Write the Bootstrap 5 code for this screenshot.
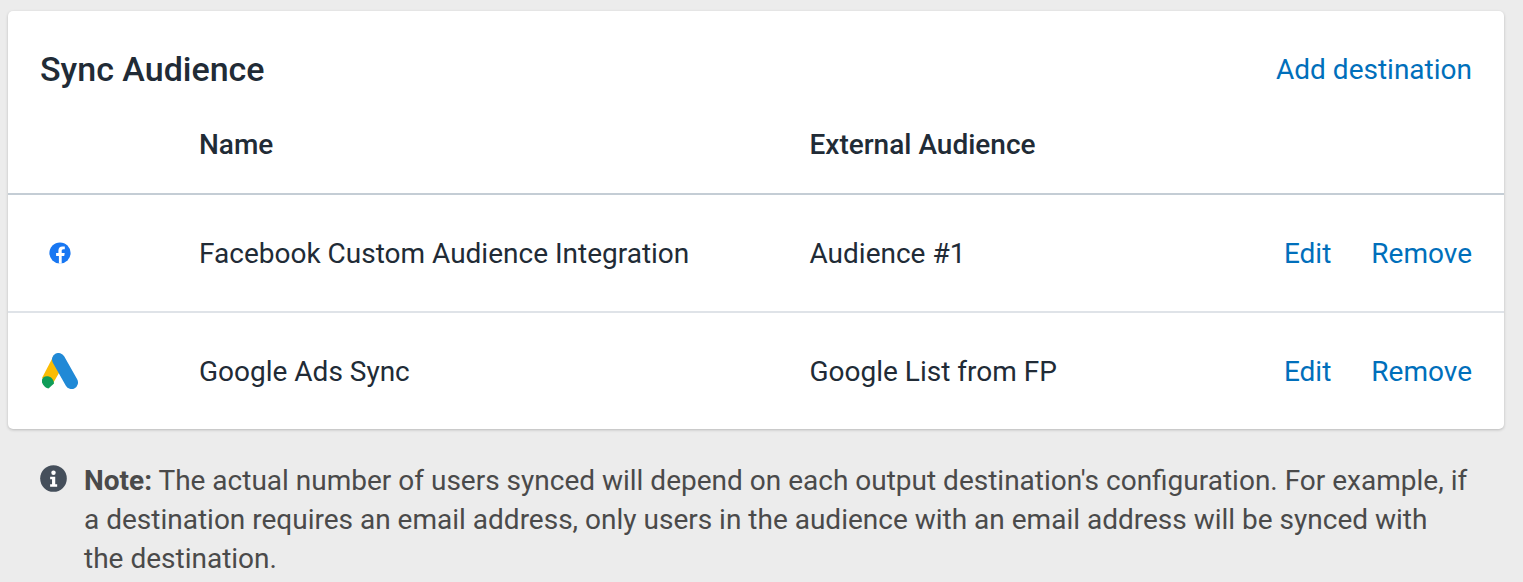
<!doctype html>
<html lang="en"><head><meta charset="utf-8">
<link href="https://cdn.jsdelivr.net/npm/bootstrap@5.3.0/dist/css/bootstrap.min.css" rel="stylesheet">
<style>
html,body{height:582px;overflow:hidden}
body{background:#ececec;font-family:Roboto,sans-serif;font-size:28px;color:#212b36}
.wrapper{padding:11px 19px 0 8px}
.panel{background:#fff;border-radius:5px;box-shadow:0 1px 3px rgba(0,0,0,.22);height:418px}
.head-row{height:109px;padding:37px 32px 0;align-items:flex-start}
.title{font-size:34px;font-weight:500;line-height:42px;margin:0}
a.act{color:#006fbb;text-decoration:none;font-size:28px;line-height:42px}
a.add-link{margin-top:1px}
.cell-icon{width:191px;padding-left:32px;flex:none}
.cell-name{width:610.5px;flex:none}
.cell-ext{flex:1 1 auto}
.hdr{height:75px;border-bottom:2px solid #c4cdd5;font-weight:500;padding-bottom:23px}
.rowx{height:118px;border-bottom:2px solid #dfe3e8}
.rowx.end{border-bottom:0;height:116px}
.rowx .cell-name,.rowx .cell-ext,.rowx .acts{padding-top:2px}
.acts{padding-right:32px;gap:40px}
.note{padding:31px 34px 0 32px;color:#4a4a4a;line-height:39px;gap:17px}
.note-text{padding-top:1px}
.note b{font-weight:700}
.ic-info{flex:none;margin-top:5px}
.ic-fb{margin-left:9px}
.ic-ads{margin-left:1px}
svg{display:block}
</style></head><body>
<div class="wrapper">
<div class="panel">
<div class="d-flex justify-content-between head-row"><h2 class="title">Sync Audience</h2><a class="act add-link" href="#">Add destination</a></div>
<div class="d-flex align-items-center hdr"><div class="cell-icon"></div><div class="cell-name">Name</div><div class="cell-ext">External Audience</div></div>
<div class="d-flex align-items-center rowx"><div class="cell-icon"><svg class="ic-fb" width="22" height="22" viewBox="0 0 22 22"><circle cx="11" cy="11" r="10.600" fill="#1877f2"/><path fill="#fff" d="M15.200 14.100l.5-3.100h-3v-2c0-.9.4-1.700 1.800-1.700h1.300V4.600s-1.200-.2-2.400-.2c-2.500 0-4 1.500-4 4.200V11H7.100v3.100h2.800v7.500a11 11 0 0 0 2.800 0v-7.500z"/></svg></div><div class="cell-name">Facebook Custom Audience Integration</div><div class="cell-ext">Audience #1</div><div class="d-flex acts"><a class="act" href="#">Edit</a><a class="act" href="#">Remove</a></div></div>
<div class="d-flex align-items-center rowx end"><div class="cell-icon"><svg class="ic-ads" width="38" height="37" viewBox="0 0 38 37"><path fill="#fbbc04" d="M13 2 1 25 11 32 22 13z"/><line x1="17.500" y1="6.500" x2="30.500" y2="29.500" stroke="#2089d6" stroke-width="13" stroke-linecap="round"/><path fill="#0f9d58" d="M1 26.500C2 23.500 5 22.500 8 23.500 11 24.500 13 27.500 13 30.500L7.500 35.500C5.500 35.500 2 32.500 1 29.500z"/></svg></div><div class="cell-name">Google Ads Sync</div><div class="cell-ext">Google List from FP</div><div class="d-flex acts"><a class="act" href="#">Edit</a><a class="act" href="#">Remove</a></div></div>
</div>
<div class="d-flex note"><svg class="ic-info" width="27" height="27" viewBox="0 0 28 28"><circle cx="14" cy="14" r="13.800" fill="#454f5b"/><circle cx="14" cy="8" r="2.300" fill="#fff"/><path fill="#fff" d="M10.500 12.300h5.300v7.700h2v2.500h-7.300V20h2v-5.200h-2z"/></svg><div class="note-text"><b>Note:</b> The actual number of users synced will depend on each output destination's configuration. For example, if a destination requires an email address, only users in the audience with an email address will be synced with the destination.</div></div>
</div>
<script src="https://cdn.jsdelivr.net/npm/bootstrap@5.3.0/dist/js/bootstrap.bundle.min.js"></script>
</body></html>
